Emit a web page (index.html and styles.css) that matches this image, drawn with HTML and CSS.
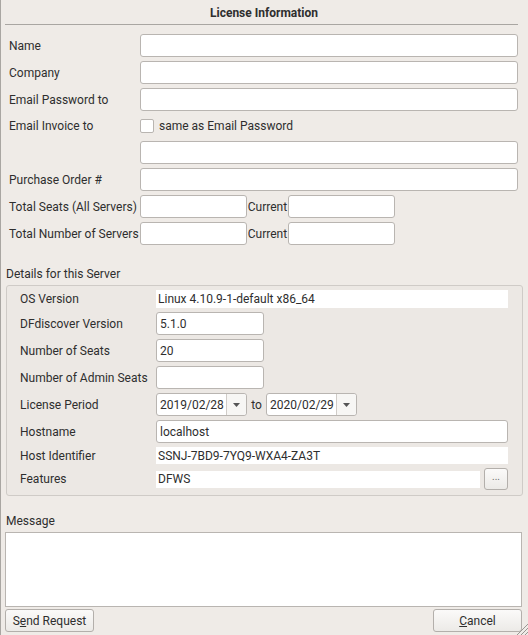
FILE: index.html
```html
<!DOCTYPE html>
<html lang="en">

<head>
    <meta charset="UTF-8">
    <meta name="viewport" content="width=device-width, initial-scale=1.0">
    <title>License Information</title>
    <link rel="stylesheet" href="styles.css">
</head>

<body>
    <div class="dialog">
        <div class="title">License Information</div>
        <div class="rule"></div>

        <div class="form">
            <label class="lbl">Name</label>
            <input class="txt" type="text">
            <label class="lbl">Company</label>
            <input class="txt" type="text">
            <label class="lbl">Email Password to</label>
            <input class="txt" type="text">
            <label class="lbl">Email Invoice to</label>
            <div class="check-row"><span class="check"></span><span>same as Email Password</span></div>
            <span></span>
            <input class="txt" type="text">
            <label class="lbl">Purchase Order #</label>
            <input class="txt" type="text">
            <label class="lbl">Total Seats (All Servers)</label>
            <div class="pair"><input class="txt short" type="text"><span class="cur">Current</span><input class="txt short" type="text"></div>
            <label class="lbl">Total Number of Servers</label>
            <div class="pair"><input class="txt short" type="text"><span class="cur">Current</span><input class="txt short" type="text"></div>
        </div>

        <div class="section-label">Details for this Server</div>
        <div class="group">
            <span class="lbl">OS Version</span>
            <div class="ro ro-os">Linux 4.10.9-1-default x86_64</div>
            <span class="lbl">DFdiscover Version</span>
            <input class="txt num" type="text" value="5.1.0">
            <span class="lbl">Number of Seats</span>
            <input class="txt num" type="text" value="20">
            <span class="lbl">Number of Admin Seats</span>
            <input class="txt num" type="text">
            <span class="lbl">License Period</span>
            <div class="period">
                <div class="combo"><span class="combo-val">2019/02/28</span><span class="combo-btn"><svg width="7" height="4" viewBox="0 0 7 4"><path d="M0 0h7L3.5 4z" fill="#555"/></svg></span></div>
                <span class="to">to</span>
                <div class="combo"><span class="combo-val">2020/02/29</span><span class="combo-btn"><svg width="7" height="4" viewBox="0 0 7 4"><path d="M0 0h7L3.5 4z" fill="#555"/></svg></span></div>
            </div>
            <span class="lbl">Hostname</span>
            <input class="txt" type="text" value="localhost">
            <span class="lbl">Host Identifier</span>
            <div class="ro ro-id">SSNJ-7BD9-7YQ9-WXA4-ZA3T</div>
            <span class="lbl">Features</span>
            <div class="features"><div class="ro ro-feat">DFWS</div><button class="dots">...</button></div>
        </div>

        <div class="msg-label">Message</div>
        <textarea class="msg"></textarea>

        <div class="buttons">
            <button class="btn">S<u>e</u>nd Request</button>
            <button class="btn"><u>C</u>ancel</button>
        </div>
        <svg class="grip" width="12" height="12" viewBox="0 0 12 12">
            <path d="M12 1L1 12M12 5L5 12M12 9L9 12" stroke="#9a9692" stroke-width="1" fill="none"/>
        </svg>
    </div>
</body>

</html>
```

FILE: styles.css
```css
body {
    margin: 0;
    background-color: #efebe7;
    font-family: Roboto, "Noto Sans", sans-serif;
    font-size: 12px;
    color: #2e2e2e;
}

.dialog {
    position: relative;
    height: 635px;
    border-left: 1px solid #a9a6a2;
    box-sizing: border-box;
    overflow: hidden;
}

.title {
    height: 24px;
    line-height: 26px;
    text-align: center;
    font-weight: bold;
    margin-left: -1px;
}

.rule {
    height: 1px;
    background-color: #a9a6a2;
    margin: 0 10px 0 4px;
}

.form {
    display: grid;
    grid-template-columns: 131px 378px;
    row-gap: 4px;
    margin: 9px 0 0 8px;
}

.lbl {
    display: flex;
    align-items: center;
    white-space: nowrap;
}

.txt {
    height: 23px;
    box-sizing: border-box;
    border: 1px solid #b9b5b1;
    border-radius: 3px;
    background-color: #ffffff;
    font-family: inherit;
    font-size: 12px;
    color: #2e2e2e;
    padding: 0 3px;
    margin: 0;
    outline: none;
}

.check-row {
    display: flex;
    align-items: center;
    height: 22px;
    gap: 5px;
}

.check {
    width: 14px;
    height: 14px;
    box-sizing: border-box;
    border: 1px solid #b9b5b1;
    border-radius: 2px;
    background-color: #ffffff;
}

.pair {
    display: flex;
    align-items: center;
}

.short {
    width: 107px;
}

.cur {
    width: 41px;
    text-align: center;
}

.section-label {
    margin: 22px 0 0 5px;
    height: 14px;
    line-height: 14px;
}

.group {
    display: grid;
    grid-template-columns: 136px 352px;
    row-gap: 4px;
    margin: 4px 5px 0 5px;
    padding: 4px 13px 5px 13px;
    border: 1px solid #cfcbc7;
    border-radius: 3px;
    background-color: #ece8e4;
}

.ro {
    background-color: #ffffff;
    display: flex;
    align-items: center;
    padding-left: 2px;
}

.ro-os {
    height: 18px;
}

.ro-id {
    height: 17px;
}

.num {
    width: 108px;
}

.period {
    display: flex;
    align-items: center;
    height: 23px;
}

.combo {
    display: flex;
    width: 91px;
    height: 23px;
    box-sizing: border-box;
    border: 1px solid #b9b5b1;
    border-radius: 3px;
    background-color: #ffffff;
}

.combo-val {
    flex: 1;
    display: flex;
    align-items: center;
    padding-left: 3px;
}

.combo-btn {
    width: 19px;
    border-left: 1px solid #d0ccc8;
    display: flex;
    align-items: center;
    justify-content: center;
    background-color: #f7f6f4;
    border-radius: 0 3px 3px 0;
}

.to {
    width: 19px;
    text-align: center;
}

.features {
    display: flex;
    align-items: center;
    gap: 4px;
    height: 22px;
}

.ro-feat {
    width: 322px;
    height: 17px;
}

.dots {
    width: 24px;
    height: 22px;
    padding: 0 0 5px 0;
    font-size: 10px;
    color: #6a6a6a;
}

button {
    box-sizing: border-box;
    border: 1px solid #b3afab;
    border-radius: 3px;
    background: linear-gradient(#fbfaf9, #eceae7);
    font-family: inherit;
    font-size: 12px;
    color: #2e2e2e;
    margin: 0;
}

.msg-label {
    margin: 18px 0 0 5px;
    height: 14px;
    line-height: 14px;
}

.msg {
    display: block;
    width: 517px;
    height: 75px;
    box-sizing: border-box;
    margin: 4px 0 0 4px;
    border: 1px solid #b9b5b1;
    background-color: #ffffff;
    resize: none;
    outline: none;
}

.buttons {
    display: flex;
    justify-content: space-between;
    margin: 2px 6px 0 4px;
}

.btn {
    width: 89px;
    height: 23px;
}

.grip {
    position: absolute;
    right: 0;
    bottom: 0;
}
```
